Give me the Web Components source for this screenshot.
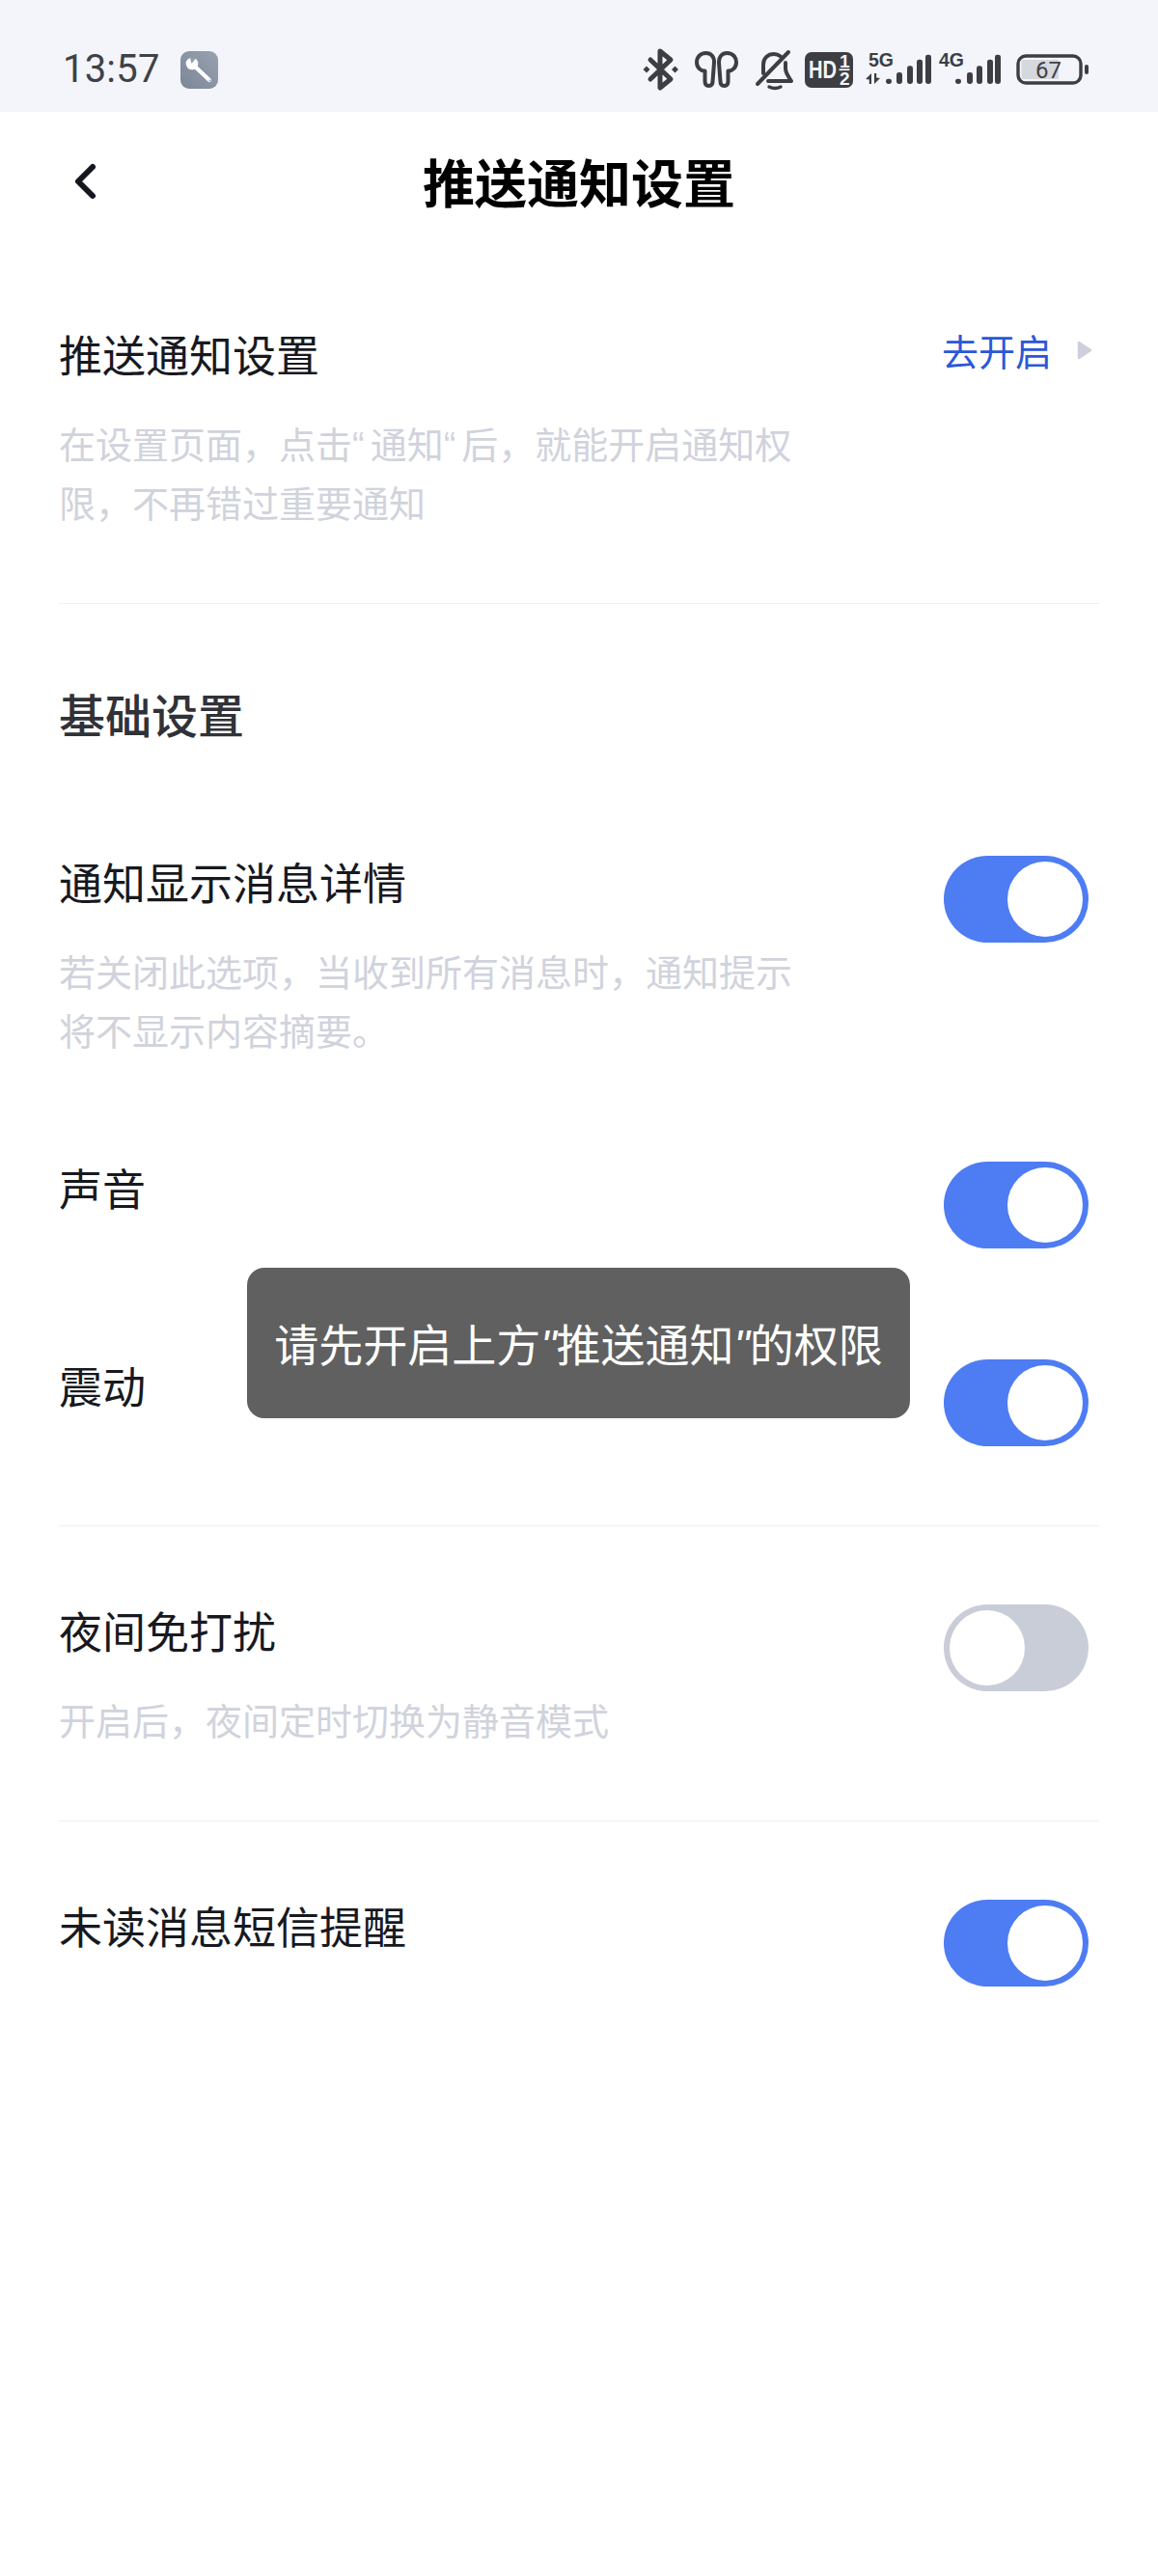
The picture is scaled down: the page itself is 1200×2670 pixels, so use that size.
<!DOCTYPE html>
<html lang="zh-CN">
<head>
<meta charset="utf-8">
<title>推送通知设置</title>
<style>
  html, body { margin: 0; padding: 0; background: #fff; }
  body {
    position: relative;
    min-height: 2670px;
    font-family: "Noto Sans CJK SC", "Noto Sans", sans-serif;
    overflow: hidden;
  }
  .q { font-family: "Liberation Sans", sans-serif; line-height: 0; letter-spacing: 6px; }
  i.q { letter-spacing: 0; }
</style>
</head>
<body>
<status-bar></status-bar>
<nav-header>推送通知设置</nav-header>

<setting-row style="margin-top:73px" no-switch>
  推送通知设置
  <span slot="sub">在设置页面，点击<span class="q">“</span>通知<span class="q">“</span>后，就能开启通知权<br>限，不再错过重要通知</span>
  <open-link slot="action">去开启</open-link>
</setting-row>
<thin-line style="margin-top:75px"></thin-line>

<section-title style="margin-top:83px">基础设置</section-title>

<setting-row style="margin-top:115px">
  通知显示消息详情
  <span slot="sub">若关闭此选项，当收到所有消息时，通知提示将不显示内容摘要。</span>
  <base-switch slot="action" checked></base-switch>
</setting-row>
<setting-row style="margin-top:104px">
  声音
  <base-switch slot="action" checked></base-switch>
</setting-row>
<setting-row style="margin-top:112px">
  震动
  <base-switch slot="action" checked></base-switch>
</setting-row>
<thin-line style="margin-top:82px"></thin-line>

<setting-row style="margin-top:78px">
  夜间免打扰
  <span slot="sub">开启后，夜间定时切换为静音模式</span>
  <base-switch slot="action"></base-switch>
</setting-row>
<thin-line style="margin-top:75px"></thin-line>

<setting-row style="margin-top:78px">
  未读消息短信提醒
  <base-switch slot="action" checked></base-switch>
</setting-row>

<toast-message>请先开启上方<i class="q">"</i>推送通知<i class="q">"</i>的权限</toast-message>

<script>
const BARS = (xs, color) => {
  const tops = [26.7, 20, 13.3, 6.7, 1.7];
  return xs.map((x, i) => `<rect x="${x}" y="${tops[i]}" width="6" height="${32 - tops[i]}" rx="2.4" fill="${color}"/>`).join('');
};

class StatusBar extends HTMLElement {
  constructor() {
    super();
    this.attachShadow({ mode: 'open' });
  }

  connectedCallback() {
    const ink = '#3c3e43';
    this.shadowRoot.innerHTML = `
      <style>
        :host {
          display: flex; align-items: center; box-sizing: border-box;
          height: 116px; padding: 28px 72px 0 65px; background: #f3f5fb;
        }
        .time { font: 400 40px/1 Roboto, sans-serif; color: #3f4146; letter-spacing: .2px; }
        .tool { width: 39px; height: 39px; margin-left: 21px; }
        .right { margin-left: auto; display: flex; align-items: center; }
        svg { display: block; flex-shrink: 0; overflow: visible; }
        text { font-family: "Liberation Sans", sans-serif; }
      </style>
      <span class="time">13:57</span>
      <svg class="tool" viewBox="0 0 39 39">
        <defs><linearGradient id="g" x1="1" y1="0" x2="0" y2="1">
          <stop offset="0" stop-color="#98a2b0"/><stop offset="1" stop-color="#7b8697"/>
        </linearGradient></defs>
        <rect width="39" height="39" rx="9" fill="url(#g)"/>
        <path d="M14 15 L30 30" stroke="#fff" stroke-width="4.200" stroke-linecap="round"/>
        <circle cx="12" cy="13" r="6.300" fill="#fff"/>
        <path d="M11.500 13 L9.500 5 L17 6 Z" fill="#919ba9"/>
        <circle cx="30.500" cy="30.500" r="1" fill="#8f9aa9"/>
      </svg>
      <div class="right">
        <svg width="38" height="42" viewBox="0 0 38 42" fill="none" stroke="${ink}" stroke-width="5" stroke-linejoin="round" stroke-linecap="round">
          <path d="M8 11 L29 31 L18 40 L18 2 L29 11 L8 31"/>
          <path d="M0.500 21 L4 17.500 L7.500 21 L4 24.500 Z M30 21 L33.500 17.500 L37 21 L33.500 24.500 Z" fill="${ink}" stroke="none"/>
        </svg>
        <svg style="margin-left:16px" width="45" height="38" viewBox="0 0 45 38" fill="none" stroke="${ink}" stroke-width="4" stroke-linejoin="round">
          <path d="M11.500 2 C5.500 2 2 6.500 2 11.500 C2 17 6 20.500 10.500 20.500 L10.500 31.500 Q10.500 36 14.500 36 Q18.500 36 18.500 31.500 L20 12 C20.300 6 17 2 11.500 2 Z"/>
          <path d="M33.500 2 C39.500 2 43 6.500 43 11.500 C43 17 39 20.500 34.500 20.500 L34.500 31.500 Q34.500 36 30.500 36 Q26.500 36 26.500 31.500 L25 12 C24.700 6 28 2 33.500 2 Z"/>
        </svg>
        <svg style="margin-left:18px" width="39" height="41" viewBox="0 0 39 41" fill="none" stroke="${ink}" stroke-width="4" stroke-linecap="round" stroke-linejoin="round">
          <path d="M2 35 L34 2"/>
          <path d="M8 24 L8 15 C8 8 13 4 19 4 C22 4 24 5 26 6.500"/>
          <path d="M31 13 L31 19 C31 24 34 27 37 32 L13 32"/>
          <path d="M14 38 Q20 41 26 38" stroke-width="3.400"/>
        </svg>
        <svg style="margin-left:12px" width="50" height="37" viewBox="0 0 50 37">
          <rect width="50" height="37" rx="7" fill="${ink}"/>
          <text x="4" y="27" font-size="25" font-weight="700" fill="#f3f5fb" textLength="29" lengthAdjust="spacingAndGlyphs">HD</text>
          <text x="36" y="15.500" font-size="19" font-weight="700" fill="#f3f5fb">1</text>
          <rect x="35.500" y="17.300" width="11" height="1.800" fill="#f3f5fb"/>
          <text x="36" y="34" font-size="19" font-weight="700" fill="#f3f5fb">2</text>
        </svg>
        <svg style="margin-left:13px" width="68" height="34" viewBox="0 0 68 34">
          <text x="3" y="13.500" font-size="19.500" font-weight="700" fill="${ink}">5G</text>
          <path d="M0 27 L6 21 L6 32 L3.800 32 L3.800 27.500 Z M9 21 L11.200 21 L11.200 25.500 L15 26 L9 32 Z" fill="${ink}"/>
          ${BARS([21, 32, 43, 53, 62], ink)}
        </svg>
        <svg style="margin-left:8px" width="64" height="34" viewBox="0 0 64 34">
          <text x="0" y="13.500" font-size="19.500" font-weight="700" fill="${ink}">4G</text>
          ${BARS([17, 29, 39, 50, 58], ink)}
        </svg>
        <svg style="margin-left:16px" width="75" height="32" viewBox="0 0 75 32">
          <rect x="2" y="2" width="65" height="28" rx="8" fill="none" stroke="${ink}" stroke-width="3.400"/>
          <path d="M6.500 6 H44 V26 H6.500 Q5.500 26 5.500 25 V7 Q5.500 6 6.500 6 Z" fill="#d5d8de"/>
          <text x="33.500" y="25" font-size="24" text-anchor="middle" style="font-family:Roboto,sans-serif" fill="#3f4146">67</text>
          <rect x="71" y="11" width="4" height="10" rx="2" fill="${ink}"/>
        </svg>
      </div>
    `;
  }
}

class NavHeader extends HTMLElement {
  constructor() {
    super();
    this.attachShadow({ mode: 'open' });
  }

  connectedCallback() {
    this.shadowRoot.innerHTML = `
      <style>
        :host {
          display: flex; align-items: center; justify-content: center;
          position: relative; box-sizing: border-box; height: 148px; padding-bottom: 5px;
          font-size: 54px; font-weight: 700; color: #000;
        }
        svg { position: absolute; left: 75px; top: 52px; }
      </style>
      <svg width="26" height="40" viewBox="0 0 26 40" fill="none" stroke="#15171f" stroke-width="6" stroke-linecap="round" stroke-linejoin="round">
        <path d="M21 5 L6 20 L21 35"/>
      </svg>
      <slot></slot>
    `;
  }
}

class SettingRow extends HTMLElement {
  constructor() {
    super();
    this.attachShadow({ mode: 'open' });
  }

  connectedCallback() {
    const sub = this.querySelector('[slot="sub"]');
    this.shadowRoot.innerHTML = `
      <style>
        :host {
          display: flex; justify-content: space-between; align-items: flex-start;
          padding: 0 72px 0 61px;
        }
        .title { font-size: 45px; line-height: 60px; color: #17191f; }
        .sub {
          width: 770px; margin-top: 31px;
          font-size: 38px; line-height: 61px; color: #d0d3dc;
        }
        .action { padding-top: 3px; flex-shrink: 0; }
      </style>
      <div>
        <div class="title"><slot></slot></div>
        ${sub ? '<div class="sub"><slot name="sub"></slot></div>' : ''}
      </div>
      <div class="action"><slot name="action"></slot></div>
    `;
  }
}

class BaseSwitch extends HTMLElement {
  constructor() {
    super();
    this.attachShadow({ mode: 'open' });
  }

  connectedCallback() {
    this.shadowRoot.innerHTML = `
      <style>
        :host {
          display: flex; box-sizing: border-box;
          width: 150px; height: 90px; padding: 6px; border-radius: 45px;
          background: #c9cdd8;
        }
        :host([checked]) { background: #4d7cf3; justify-content: flex-end; }
        i { display: block; width: 78px; height: 78px; border-radius: 50%; background: #fff; }
      </style>
      <i></i>
    `;
  }
}

class OpenLink extends HTMLElement {
  constructor() {
    super();
    this.attachShadow({ mode: 'open' });
  }

  connectedCallback() {
    this.shadowRoot.innerHTML = `
      <style>
        :host {
          display: flex; align-items: center; gap: 26px;
          margin: -5px -4px 0 0;
          font-size: 38px; line-height: 56px; color: #2b57d9;
        }
        svg { display: block; }
      </style>
      <slot></slot>
      <svg width="16" height="20" viewBox="0 0 16 20">
        <path d="M2 2 L14 10 L2 18 Z" fill="#cdd0dc" stroke="#cdd0dc" stroke-width="2.500" stroke-linejoin="round"/>
      </svg>
    `;
  }
}

class ThinLine extends HTMLElement {
  constructor() {
    super();
    this.attachShadow({ mode: 'open' });
    this.shadowRoot.innerHTML = `
      <style>
        :host { display: block; height: 1px; margin: 0 61px; background: #eceef2; }
      </style>
    `;
  }
}

class SectionTitle extends HTMLElement {
  constructor() {
    super();
    this.attachShadow({ mode: 'open' });
    this.shadowRoot.innerHTML = `
      <style>
        :host {
          display: block; padding-left: 61px;
          font-size: 48px; font-weight: 500; line-height: 60px; color: #303238;
        }
      </style>
      <slot></slot>
    `;
  }
}

class ToastMessage extends HTMLElement {
  constructor() {
    super();
    this.attachShadow({ mode: 'open' });
    this.shadowRoot.innerHTML = `
      <style>
        :host {
          position: absolute; left: 256px; top: 1314px;
          display: flex; align-items: center; justify-content: center;
          box-sizing: border-box; padding-bottom: 2px;
          width: 687px; height: 156px; border-radius: 18px;
          background: #606060; color: #fff;
          font-size: 46px; white-space: nowrap;
        }
      </style>
      <span><slot></slot></span>
    `;
  }
}

customElements.define('status-bar', StatusBar);
customElements.define('nav-header', NavHeader);
customElements.define('setting-row', SettingRow);
customElements.define('base-switch', BaseSwitch);
customElements.define('open-link', OpenLink);
customElements.define('thin-line', ThinLine);
customElements.define('section-title', SectionTitle);
customElements.define('toast-message', ToastMessage);
</script>
</body>
</html>
